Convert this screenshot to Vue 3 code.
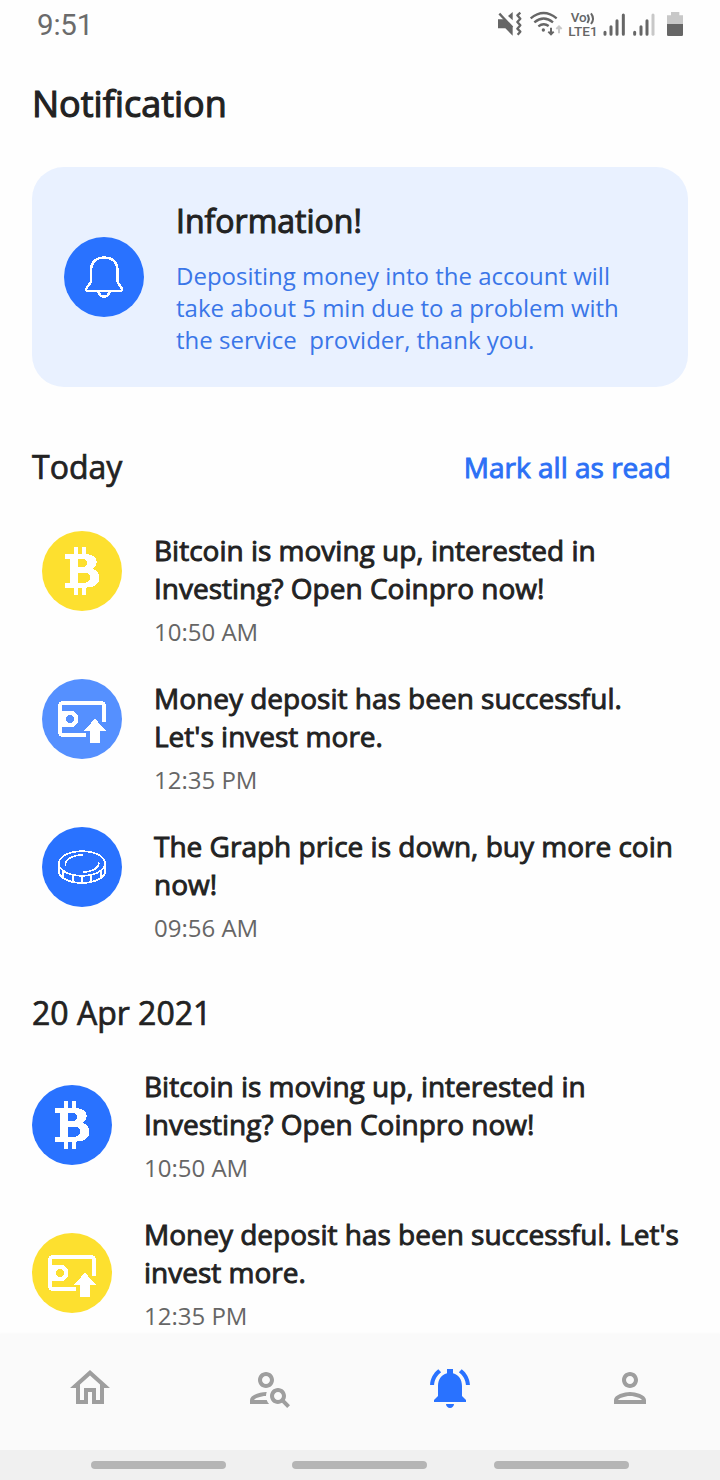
<script setup>
const sections = [
  {
    title: 'Today',
    action: 'Mark all as read',
    kind: 'today',
    items: [
      { icon: 'bitcoin', color: '#fde02f', lines: ['Bitcoin is moving up, interested in', 'Investing? Open Coinpro now!'], time: '10:50 AM' },
      { icon: 'deposit', color: '#5590ff', lines: ['Money deposit has been successful.', "Let's invest more."], time: '12:35 PM' },
      { icon: 'coin', color: '#2972ff', lines: ['The Graph price is down, buy more coin', 'now!'], time: '09:56 AM' },
    ],
  },
  {
    title: '20 Apr 2021',
    kind: 'older',
    items: [
      { icon: 'bitcoin', color: '#2972ff', lines: ['Bitcoin is moving up, interested in', 'Investing? Open Coinpro now!'], time: '10:50 AM' },
      { icon: 'deposit', color: '#fde02f', lines: ["Money deposit has been successful. Let's", 'invest more.'], time: '12:35 PM' },
    ],
  },
]

const tabs = [
  { name: 'home', paths: ['M12 5.69l5 4.5V18h-2v-6H9v6H7v-7.81l5-4.5M12 3L2 12h3v8h6v-6h2v6h6v-8h3L12 3z'] },
  {
    name: 'search',
    paths: [
      'M10 12c2.21 0 4-1.79 4-4s-1.79-4-4-4-4 1.79-4 4 1.79 4 4 4zm0-6c1.1 0 2 .9 2 2s-.9 2-2 2-2-.9-2-2 .9-2 2-2z',
      'M4 18c.22-.72 3.31-2 6-2 0-.7.13-1.37.35-1.99C7.62 13.91 2 15.27 2 18v2h9.54c-.52-.58-.93-1.25-1.19-2H4z',
      'M19.43 18.02c.36-.59.57-1.28.57-2.02 0-2.21-1.79-4-4-4s-4 1.79-4 4 1.79 4 4 4c.74 0 1.43-.22 2.02-.57L20.59 22 22 20.59l-2.57-2.57zM16 18c-1.1 0-2-.9-2-2s.9-2 2-2 2 .9 2 2-.9 2-2 2z',
    ],
  },
  {
    name: 'alerts',
    active: true,
    paths: [
      'M12 22c1.1 0 2-.9 2-2h-4c0 1.1.9 2 2 2z',
      'M18 16v-5c0-3.07-1.63-5.64-4.5-6.32V2.5h-3v2.18C7.64 5.36 6 7.92 6 11v5l-2 2v1h16v-1l-2-2z',
      'M7.58 4.08L6.15 2.65C3.75 4.48 2.17 7.3 2.03 10.5h2c.15-2.65 1.51-4.97 3.55-6.42zM19.97 10.5h2c-.15-3.2-1.73-6.02-4.12-7.85l-1.42 1.43c2.02 1.45 3.39 3.77 3.54 6.42z',
    ],
  },
  {
    name: 'profile',
    paths: ['M12 6c1.1 0 2 .9 2 2s-.9 2-2 2-2-.9-2-2 .9-2 2-2m0 10c2.7 0 5.8 1.29 6 2H6c.23-.72 3.31-2 6-2m0-12C9.79 4 8 5.79 8 8s1.79 4 4 4 4-1.79 4-4-1.79-4-4-4zm0 10c-2.67 0-8 1.34-8 4v2h16v-2c0-2.66-5.33-4-8-4z'],
  },
]
</script>

<template>
  <div class="screen">
    <header class="status">
      <span class="clock">9:51</span>
      <svg class="status-icons" viewBox="0 0 720 150">
        <g fill="#666">
          <path d="M54 58h20l24 24v25L76 85H54z" />
          <path d="M84 48L98 36v25z" />
          <path d="M58 41L97 82" stroke="#666" stroke-width="7" />
          <path d="M121 38l-9 8 9 10-9 10 9 10-9 10 9 9-8 9" fill="none" stroke="#666" stroke-width="7" stroke-linejoin="round" />
        </g>
        <g fill="none" stroke="#666" stroke-width="7">
          <path d="M152 55Q191 23 230 55" />
          <path d="M163 67Q191 44 219 67" />
          <path d="M175 79Q191 67 206 78" />
        </g>
        <circle cx="190" cy="90" r="5" fill="#666" />
        <path d="M213 83v20M205 95l8 8 8-8" fill="none" stroke="#666" stroke-width="6" />
        <path d="M237 100V79M229 87l8-8 8 8" fill="none" stroke="#c8c8c8" stroke-width="6" />
        <text x="272" y="66" class="volte" textLength="48" lengthAdjust="spacingAndGlyphs">Vo</text>
        <path d="M322 44q9 12 0 25M333 40q12 16 0 32" fill="none" stroke="#666" stroke-width="6" />
        <text x="265" y="107" class="lte" textLength="88" lengthAdjust="spacingAndGlyphs">LTE1</text>
        <g stroke="#666" stroke-width="9" stroke-linecap="round">
          <path d="M375 97v6M393 80v23M411 62v41M430 45v58" />
          <path d="M464 97v6M483 80v23M501 62v41" />
          <path d="M519 45v58" stroke="#c8c8c8" />
        </g>
        <path d="M573 36h25v10h11v27h-48V46h12z" fill="#c8c8c8" />
        <path d="M561 72h48v32q0 4-4 4h-40q-4 0-4-4z" fill="#666" />
      </svg>
    </header>

    <main class="content">
      <h1 class="heading">Notification</h1>

      <section class="info">
        <div class="badge info-badge">
          <svg viewBox="0 0 80 80" fill="none" stroke="#fff" stroke-width="2.5" stroke-linejoin="round">
            <path d="M26.800 35C26.800 25.500 31.500 20.600 40 20.600S53.700 25.500 53.700 35v9.500c0 3 4.300 5 4.300 8 0 1-.6 1.300-1.600 1.300H23.800c-1 0-1.600-.3-1.600-1.300 0-3 4.600-5 4.600-8z" />
            <path d="M34.300 54.500Q35.500 59.600 40 59.600T45.700 54.500" />
          </svg>
        </div>
        <div class="info-text">
          <h2 class="info-title">Information!</h2>
          <p class="info-body">Depositing money into the account will<br />take about 5 min due to a problem with<br />the service&nbsp; provider, thank you.</p>
        </div>
      </section>

      <section v-for="s in sections" :key="s.title" class="section" :class="s.kind">
        <div class="section-head">
          <h2 class="section-title">{{ s.title }}</h2>
          <span v-if="s.action" class="action">{{ s.action }}</span>
        </div>
        <ul class="list">
          <li v-for="item in s.items" :key="item.time" class="item">
            <div class="badge" :style="{ background: item.color }">
              <svg v-if="item.icon === 'bitcoin'" viewBox="0 0 80 80">
                <path
                  fill="#fff"
                  fill-rule="evenodd"
                  d="M23 23h9.300v-6.700H36V23h4v-6.700h4V23c7 .3 10.700 3.200 10.700 8 0 3.500-1.500 5.800-4.200 7 4.500 1.300 6.800 4.200 6.800 8.600 0 6.300-4.500 9.800-13.300 10.100V64h-4v-7.300h-4V64h-3.700v-7.300H23v-5h5V28h-5zM36 28v8.400h4.500c3.200 0 4.300-1.700 4.300-4.200s-1.100-4.200-4.300-4.200zM36 41.500v10.200h6.500c3.700 0 5.500-2 5.500-5.100s-1.800-5.100-5.500-5.100z"
                />
              </svg>
              <svg v-else-if="item.icon === 'deposit'" viewBox="0 0 80 80">
                <path d="M62 42.500V27.700q0-4-4-4H22q-4 0-4 4v24.600q0 4 4 4h21.500" fill="none" stroke="#fff" stroke-width="4" />
                <path d="M60 39l4 4.500v-5zM39 54.300l5 4v-2z" fill="#fff" />
                <path fill="#fff" fill-rule="evenodd" d="M18 31.700h13l5 5v6.600l-5 5H18zM28 36a4 4 0 1 0 0 8 4 4 0 1 0 0-8z" />
                <path d="M53 39.700L64.300 52H58v10.500q0 1.500-1.500 1.500h-7q-1.500 0-1.500-1.500V52h-6.300z" fill="#fff" />
              </svg>
              <svg v-else viewBox="0 0 80 80" fill="none" stroke="#fff" stroke-width="1.700">
                <ellipse cx="40" cy="36.500" rx="23.200" ry="12.300" />
                <path d="M16.800 36.500v7.500c0 6.500 10 11.900 23.200 11.900S63.200 50.500 63.200 44v-7.500" />
                <path d="M21 44v6.500M31 47.700v7M40 48.700v7M49 47.700v7M59 44v6.500" />
                <path d="M23.500 38c-1-5 6-9.600 17-10.200M56.800 36c0 5-6.500 8.700-15.300 9.300" stroke-linecap="round" />
              </svg>
            </div>
            <div class="item-text">
              <p class="item-title"><span v-for="l in item.lines" :key="l">{{ l }}</span></p>
              <time class="item-time">{{ item.time }}</time>
            </div>
          </li>
        </ul>
      </section>
    </main>

    <nav class="tabs">
      <a v-for="t in tabs" :key="t.name" class="tab" :class="{ active: t.active }">
        <svg viewBox="0 0 24 24"><path v-for="p in t.paths" :key="p" :d="p" /></svg>
      </a>
    </nav>
    <footer class="system"><i /><i /><i /></footer>
  </div>
</template>

<style>
body {
  margin: 0;
  background: #fefefe;
}
</style>

<style scoped>
.screen {
  width: 720px;
  height: 1480px;
  display: flex;
  flex-direction: column;
  overflow: hidden;
  background: #fefefe;
  font-family: 'Open Sans', sans-serif;
  color: #222;
}
h1, h2, p, ul {
  margin: 0;
  padding: 0;
  font-weight: 400;
}
svg {
  display: block;
}
.status {
  height: 50px;
  flex: none;
  display: flex;
  justify-content: space-between;
}
.clock {
  margin-left: 37px;
  font: 400 29.500px/50px Roboto, sans-serif;
  letter-spacing: -0.2px;
  color: #6b6b6b;
}
.status-icons {
  width: 240px;
  height: 50px;
}
.volte, .lte {
  font-family: Roboto, sans-serif;
  font-size: 38px;
  font-weight: 500;
  fill: #666;
}
.content {
  flex: 1;
  min-height: 0;
  overflow: hidden;
  padding: 0 32px;
}
.heading {
  margin-top: 29px;
  font-size: 36px;
  line-height: 50px;
  -webkit-text-stroke: 1.1px #222;
}
.info {
  display: flex;
  align-items: center;
  gap: 32px;
  height: 220px;
  margin-top: 38px;
  padding: 0 32px;
  box-sizing: border-box;
  border-radius: 32px;
  background: #e9f1ff;
}
.badge {
  width: 80px;
  height: 80px;
  flex: none;
  border-radius: 50%;
}
.badge svg {
  shape-rendering: crispEdges;
}
.info-badge {
  background: #2972ff;
}
.info-title {
  font-size: 32px;
  line-height: 44px;
  margin-bottom: 17px;
  -webkit-text-stroke: 1px #222;
}
.info-body {
  font-size: 24px;
  line-height: 32px;
  color: #3a76e8;
  white-space: nowrap;
}
.section-head {
  display: flex;
  justify-content: space-between;
  align-items: center;
  height: 44px;
}
.section-title {
  font-size: 32px;
  line-height: 44px;
  -webkit-text-stroke: 0.7px #222;
}
.action {
  margin-right: 17px;
  font-size: 28px;
  line-height: 44px;
  color: #2b70f5;
  -webkit-text-stroke: 0.9px #2b70f5;
}
.list {
  list-style: none;
  display: grid;
  gap: 31px;
}
.item {
  display: flex;
  gap: 32px;
  height: 117px;
}
.today { margin-top: 58px; }
.today .list { margin: 42px 0 0 10px; }
.older { margin-top: 47px; }
.older .list { margin-top: 32px; }
.older .item { align-items: center; }
.older .badge { margin-bottom: 2px; }
.item-title {
  font-size: 28px;
  line-height: 38px;
  white-space: nowrap;
  -webkit-text-stroke: 0.9px #222;
}
.item-title span {
  display: block;
}
.item-time {
  display: block;
  margin-top: 8px;
  font-size: 24px;
  line-height: 33px;
  color: #666;
}
.tabs {
  flex: none;
  height: 116px;
  display: grid;
  grid-template-columns: repeat(4, 1fr);
  background: #fafafa;
  box-shadow: 0 -1px 2px rgba(0, 0, 0, 0.02);
}
.tab {
  display: flex;
  justify-content: center;
  padding-top: 30px;
}
.tab svg {
  width: 48px;
  height: 48px;
  fill: #9e9e9e;
}
.tab.active svg {
  fill: #2972ff;
}
.system {
  flex: none;
  height: 30px;
  display: flex;
  gap: 66.400px;
  padding: 11px 0 0 91px;
  box-sizing: border-box;
  background: #f0f0f0;
}
.system i {
  width: 135px;
  height: 7.500px;
  border-radius: 4px;
  background: #b5b5b5;
}
</style>
